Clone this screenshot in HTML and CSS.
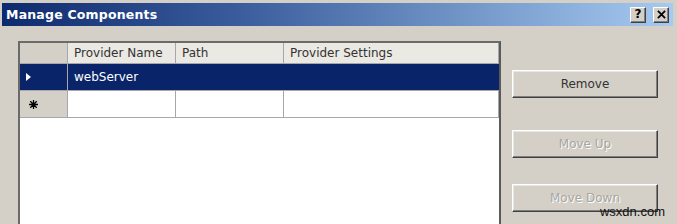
FILE: index.html
```html
<!DOCTYPE html>
<html lang="en">
<head>
    <meta charset="UTF-8">
    <title>Manage Components</title>
    <link rel="stylesheet" href="styles.css">
</head>
<body>
    <div class="dialog">
        <div class="titlebar">
            <span class="title">Manage Components</span>
            <div class="caption-buttons">
                <button class="caption-btn">?</button>
                <button class="caption-btn">
                    <svg viewBox="0 0 10 10" width="9" height="9">
                        <path d="M1 1 L9 9 M9 1 L1 9" stroke="#000" stroke-width="2"></path>
                    </svg>
                </button>
            </div>
        </div>

        <div class="content">
            <div class="grid">
                <table>
                    <tr class="head">
                        <th class="row-head"></th>
                        <th class="col-name">Provider Name</th>
                        <th class="col-path">Path</th>
                        <th>Provider Settings</th>
                    </tr>
                    <tr class="selected">
                        <td class="row-head">
                            <svg viewBox="0 0 5 8" width="5" height="8"><path d="M0 0 L5 4 L0 8 Z" fill="#fff"></path></svg>
                        </td>
                        <td>webServer</td>
                        <td></td>
                        <td></td>
                    </tr>
                    <tr class="new-row">
                        <td class="row-head">
                            <svg viewBox="0 0 9 9" width="9" height="9">
                                <path d="M4.5 0 V9 M0 4.5 H9 M1.3 1.3 L7.7 7.7 M7.7 1.3 L1.3 7.7" stroke="#000" stroke-width="1.3"></path>
                            </svg>
                        </td>
                        <td></td>
                        <td></td>
                        <td></td>
                    </tr>
                </table>
            </div>

            <div class="actions">
                <button class="btn">Remove</button>
                <button class="btn move-up" disabled>Move Up</button>
                <button class="btn move-down" disabled>Move Down</button>
            </div>
        </div>

        <span class="watermark">wsxdn.com</span>
    </div>
</body>
</html>
```

FILE: styles.css
```css
/* Dialog frame */
body {
    margin: 0;
    padding: 0;
    background: #d4d0c8;
    font-family: 'DejaVu Sans', sans-serif;
    overflow: hidden;
    height: 224px;
}

.dialog {
    position: relative;
    height: 224px;
    padding: 3px 4px 0 2px;
    box-sizing: border-box;
    overflow: hidden;
}

.titlebar {
    height: 23px;
    display: flex;
    align-items: center;
    justify-content: space-between;
    background: linear-gradient(to right, #0e2a6e 0%, #3a5c9c 35%, #a6caf0 100%);
    padding: 0 4px 0 4px;
}

.title {
    color: #ffffff;
    font-family: 'DejaVu Sans', sans-serif;
    font-weight: bold;
    font-size: 12.5px;
    letter-spacing: 0.2px;
}

.caption-buttons {
    display: flex;
    gap: 7px;
}

.caption-btn {
    width: 16px;
    height: 16px;
    padding: 0;
    margin: 0;
    background: #d4d0c8;
    border: 1px solid;
    border-color: #ffffff #404040 #404040 #ffffff;
    box-shadow: inset -1px -1px #808080;
    font-family: 'DejaVu Sans', sans-serif;
    font-weight: bold;
    font-size: 12px;
    line-height: 13px;
    color: #000;
    display: flex;
    align-items: center;
    justify-content: center;
}

/* Body */
.content {
    display: flex;
    padding: 15px 0 0 16px;
}

.grid {
    width: 479px;
    height: 200px;
    border: 2px solid;
    border-color: #6a6a6a #5a5a5a #5a5a5a #6a6a6a;
    background: #ffffff;
}

table {
    border-collapse: collapse;
    width: 100%;
    font-size: 12px;
}

th, td {
    text-align: left;
    padding: 0 6px;
    border-right: 1px solid #a7a6aa;
    border-bottom: 1px solid #a7a6aa;
    white-space: nowrap;
}

th {
    height: 20px;
    font-weight: normal;
    color: #333333;
    background: #ebe9e3;
}

td {
    height: 26px;
}

.row-head {
    width: 41px;
    background: #d4d0c8;
    padding: 0 0 0 6px;
}

.row-head svg {
    display: block;
}

.col-name,
.col-path {
    width: 95px;
}

.selected td {
    background: #0a246a;
    color: #ffffff;
    border-right-color: #0a246a;
}

.selected .row-head {
    border-right-color: #a7a6aa;
}

.new-row .row-head svg {
    margin-left: 3px;
}

/* Buttons */
.actions {
    display: flex;
    flex-direction: column;
    margin-left: 11px;
    padding-top: 29px;
}

.btn {
    width: 146px;
    height: 28px;
    background: #d4d0c8;
    border: 1px solid;
    border-color: #ffffff #404040 #404040 #ffffff;
    box-shadow: inset -1px -1px #808080, inset 1px 1px #e8e6e0;
    font-family: 'DejaVu Sans', sans-serif;
    font-size: 12px;
    color: #333333;
    padding: 0;
}

.btn:disabled {
    color: #a8a6a0;
    text-shadow: 1px 1px #ffffff;
}

.move-up {
    margin-top: 32px;
}

.move-down {
    margin-top: 26px;
}

.watermark {
    position: absolute;
    right: 12px;
    bottom: 5px;
    font-family: 'Liberation Sans', sans-serif;
    font-size: 13px;
    color: #111111;
}
```
